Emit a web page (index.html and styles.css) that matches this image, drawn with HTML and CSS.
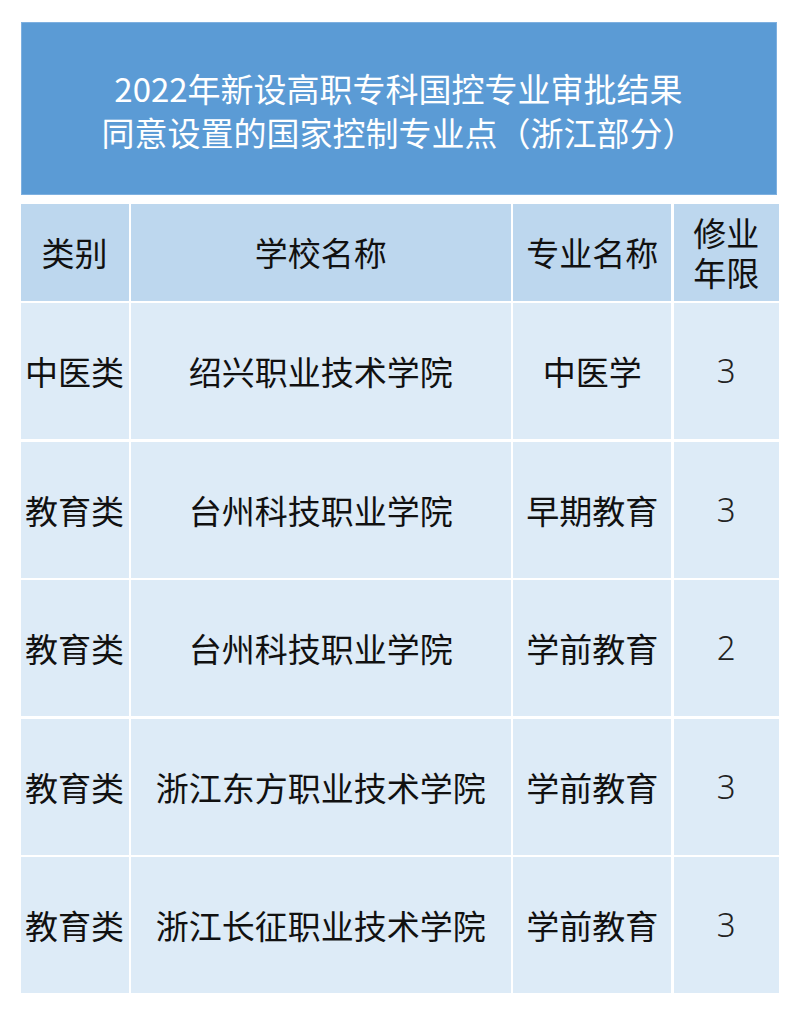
FILE: index.html
```html
<!DOCTYPE html>
<html lang="zh-CN">
<head>
<meta charset="utf-8">
<title>2022年新设高职专科国控专业审批结果</title>
<link rel="stylesheet" href="styles.css">
</head>
<body>
<div class="page">
  <div class="title-box">
    <div class="title-line">2022年新设高职专科国控专业审批结果</div>
    <div class="title-line">同意设置的国家控制专业点（浙江部分）</div>
  </div>
  <div class="table">
    <div class="cell head">类别</div>
    <div class="cell head">学校名称</div>
    <div class="cell head">专业名称</div>
    <div class="cell head stack"><span>修业</span><span>年限</span></div>

    <div class="cell">中医类</div>
    <div class="cell">绍兴职业技术学院</div>
    <div class="cell">中医学</div>
    <div class="cell num">3</div>

    <div class="cell">教育类</div>
    <div class="cell">台州科技职业学院</div>
    <div class="cell">早期教育</div>
    <div class="cell num">3</div>

    <div class="cell">教育类</div>
    <div class="cell">台州科技职业学院</div>
    <div class="cell">学前教育</div>
    <div class="cell num">2</div>

    <div class="cell">教育类</div>
    <div class="cell">浙江东方职业技术学院</div>
    <div class="cell">学前教育</div>
    <div class="cell num">3</div>

    <div class="cell">教育类</div>
    <div class="cell">浙江长征职业技术学院</div>
    <div class="cell">学前教育</div>
    <div class="cell num">3</div>
  </div>
</div>
</body>
</html>
```

FILE: styles.css
```css
html, body {
  margin: 0;
  padding: 0;
  background: #ffffff;
}

body {
  font-family: "Noto Sans CJK SC", "Noto Sans", sans-serif;
  color: #111111;
}

.page {
  width: 800px;
  height: 1016px;
  padding: 22px 0 0 20.5px;
  box-sizing: border-box;
}

.title-box {
  width: 756px;
  height: 173px;
  box-sizing: border-box;
  background: #5b9bd5;
  border: 1px solid #7eb0e0;
  color: #ffffff;
  font-size: 33px;
  line-height: 44px;
  text-align: center;
  display: flex;
  flex-direction: column;
  justify-content: center;
  padding-top: 2px;
}

.title-line {
  white-space: nowrap;
}

.table {
  margin-top: 8.5px;
  display: grid;
  grid-template-columns: 108px 379.5px 158px 105px;
  grid-template-rows: 97px repeat(5, 136px);
  column-gap: 2.6px;
  row-gap: 2.5px;
}

.cell {
  background: #ddebf7;
  display: flex;
  align-items: center;
  justify-content: center;
  text-align: center;
  font-size: 33px;
  line-height: 40px;
  white-space: nowrap;
}

.cell.head {
  background: #bdd7ee;
}

.cell.stack {
  flex-direction: column;
}

.cell.stack span {
  display: block;
  line-height: 40px;
}

.cell.num {
  font-family: "Noto Sans", "Open Sans", sans-serif;
  font-weight: 300;
  color: #222222;
}
```
